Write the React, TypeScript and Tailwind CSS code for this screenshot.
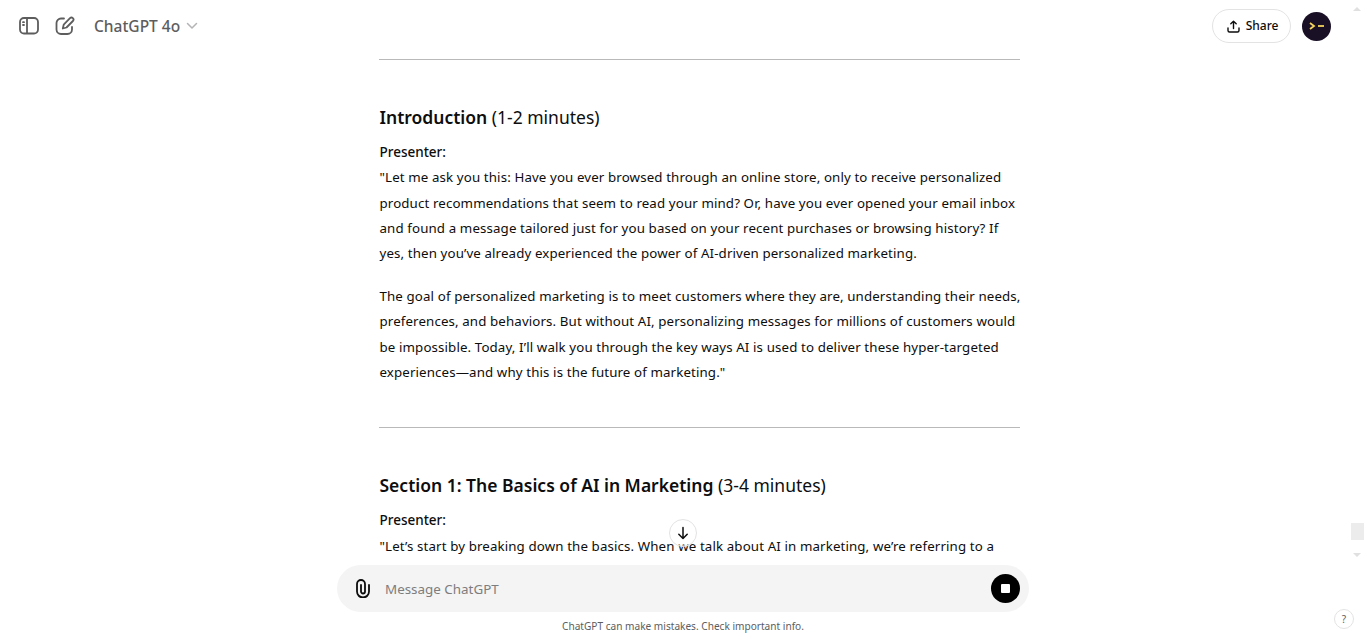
import React from "react";

const body = "text-[13.3px] tracking-[0.12px] leading-[25.4px] text-[#0d0d0d] whitespace-nowrap";

function Section({ title, time, paragraphs, nudge }: { title: string; time: string; paragraphs: string[][]; nudge?: boolean }) {
  return (
    <section className="pl-[0.5px]">
      <h3 className="text-[17.5px] leading-[26px] font-semibold text-[#0d0d0d] mb-[10.2px] whitespace-nowrap">
        {title} <span className="font-normal">{time}</span>
      </h3>
      <p className="text-[13.5px] leading-[25px] font-medium text-[#0d0d0d]">Presenter:</p>
      <div className={nudge ? "mt-[0.8px]" : ""}>
        {paragraphs.map((p, i) => (
          <div key={i} className={i > 0 ? "mt-[17.2px]" : ""}>
            {p.map((l) => (
              <div key={l} className={body}>{l}</div>
            ))}
          </div>
        ))}
      </div>
    </section>
  );
}

export default function App() {
  return (
    <div className="relative h-[641px] w-[1366px] overflow-hidden bg-white flex flex-col font-['Noto_Sans',sans-serif]">
      <header className="h-[52px] shrink-0 flex items-center pl-[19px] pr-[35px]">
        <svg width="20" height="18" viewBox="0 0 20 18" fill="none" stroke="#5d5d5d" strokeWidth="1.8">
          <rect x="1" y="1" width="18" height="15.5" rx="4" />
          <path d="M8 1v15.5" />
          <path d="M4 5.2h1M4 8h1" strokeLinecap="round" />
        </svg>
        <svg className="ml-[16px]" width="20" height="20" viewBox="0 0 20 20" fill="none" stroke="#5d5d5d" strokeWidth="1.8" strokeLinecap="round" strokeLinejoin="round">
          <path d="M9 2.5H6A4.5 4.5 0 0 0 1.5 7v6.5A4.5 4.5 0 0 0 6 18h6.5a4.5 4.5 0 0 0 4.5-4.5V11" />
          <path d="M15 2.2a2 2 0 0 1 2.9 2.8L11.5 11.5 7.8 12.5l.9-3.8z" />
        </svg>
        <span className="ml-[19px] pt-[1px] text-[15.5px] font-medium text-[#5d5d5d]">ChatGPT 4o</span>
        <svg className="ml-[6px]" width="12" height="8" viewBox="0 0 12 8" fill="none" stroke="#b4b4b4" strokeWidth="1.5" strokeLinecap="round" strokeLinejoin="round">
          <path d="M1.5 1.5 6 6l4.5-4.5" />
        </svg>
        <div className="ml-auto flex items-center gap-[11px]">
          <button className="h-[34px] w-[79px] rounded-full border border-[#e3e3e3] flex items-center justify-center gap-[6px] pl-[2px] text-[12px] font-medium text-[#0d0d0d]">
            <svg width="13" height="13" viewBox="0 0 13 13" fill="none" stroke="#0d0d0d" strokeWidth="1.4" strokeLinecap="round" strokeLinejoin="round">
              <path d="M6.5 8.5V1.2M3.8 3.8 6.5 1.2l2.7 2.6M1 8v2.5A1.5 1.5 0 0 0 2.5 12h8a1.5 1.5 0 0 0 1.5-1.5V8" />
            </svg>
            Share
          </button>
          <div className="h-[29px] w-[29px] rounded-full bg-[#1a1026] flex items-center justify-center">
            <svg width="16" height="8" viewBox="0 0 16 8" fill="none" stroke="#f3d35c" strokeWidth="1.8">
              <path d="M1 1l4 3-4 3" />
              <path d="M9 4h6" />
            </svg>
          </div>
        </div>
      </header>

      <main className="flex-1 overflow-hidden pl-[379px]">
        <div className="w-[641px]">
          <hr className="mt-[7px] border-[#b9b9b9]" />
          <div className="mt-[44px]">
            <Section
              title="Introduction"
              time="(1-2 minutes)"
              paragraphs={[
                [
                  "\"Let me ask you this: Have you ever browsed through an online store, only to receive personalized",
                  "product recommendations that seem to read your mind? Or, have you ever opened your email inbox",
                  "and found a message tailored just for you based on your recent purchases or browsing history? If",
                  "yes, then you’ve already experienced the power of AI-driven personalized marketing.",
                ],
                [
                  "The goal of personalized marketing is to meet customers where they are, understanding their needs,",
                  "preferences, and behaviors. But without AI, personalizing messages for millions of customers would",
                  "be impossible. Today, I’ll walk you through the key ways AI is used to deliver these hyper-targeted",
                  "experiences—and why this is the future of marketing.\"",
                ],
              ]}
            />
          </div>
          <hr className="mt-[41px] border-[#b9b9b9]" />
          <div className="mt-[44px]">
            <Section
              nudge
              title="Section 1: The Basics of AI in Marketing"
              time="(3-4 minutes)"
              paragraphs={[["\"Let’s start by breaking down the basics. When we talk about AI in marketing, we’re referring to a"]]}
            />
          </div>
        </div>
      </main>

      <div className="shrink-0 pl-[337px]">
        <div className="h-[47px] w-[692px] rounded-full bg-[#f4f4f4] flex items-center pl-[19px] pr-[9px]">
          <svg width="14" height="19" viewBox="0 0 14 19" fill="none" stroke="#0d0d0d" strokeWidth="1.8" strokeLinecap="round">
            <path d="M13 6v6.5a6 6 0 0 1-12 0V5a4 4 0 0 1 8 0v7.5a2 2 0 0 1-4 0V6" />
          </svg>
          <span className="ml-[15px] pt-[1px] text-[13.4px] text-[#7d7d7d]">Message ChatGPT</span>
          <div className="ml-auto h-[29px] w-[29px] rounded-full bg-black flex items-center justify-center">
            <div className="h-[9px] w-[9px] rounded-[1px] bg-white" />
          </div>
        </div>
      </div>
      <div className="h-[29px] shrink-0 flex items-center justify-center text-[10.1px] text-[#5d5d5d]">
        ChatGPT can make mistakes. Check important info.
      </div>

      <div className="absolute left-[669px] top-[519px] h-[28px] w-[28px] rounded-full bg-white/50 border border-[#e3e3e3] flex items-center justify-center">
        <svg width="14" height="14" viewBox="0 0 14 14" fill="none" stroke="#0d0d0d" strokeWidth="1.5" strokeLinecap="round" strokeLinejoin="round">
          <path d="M7 1.5v11M2.8 8.3 7 12.5l4.2-4.2" />
        </svg>
      </div>
      <div className="absolute left-[1334px] top-[609px] h-[20px] w-[20px] rounded-full border border-[#e3e3e3] flex items-center justify-center text-[10px] text-[#5d5d5d]">?</div>
      <div className="absolute left-[1351px] top-[523px] h-[17px] w-[13px] bg-[#ececec]" />
      <div className="absolute left-[1353px] top-[553px] h-0 w-0 border-x-[4px] border-x-transparent border-t-[4px] border-t-[#e0e0e0]" />
      <div className="absolute left-[1353px] top-[7px] h-0 w-0 border-x-[4px] border-x-transparent border-b-[4px] border-b-[#e0e0e0]" />
    </div>
  );
}
